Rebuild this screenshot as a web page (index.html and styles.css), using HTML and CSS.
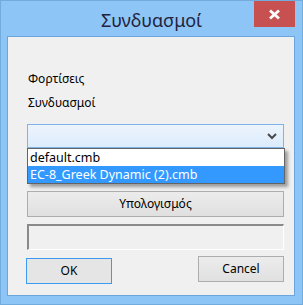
FILE: index.html
```html
<!DOCTYPE html>
<html>
<head>
<meta charset="utf-8">
<link rel="stylesheet" href="styles.css">
</head>
<body>
<div class="window">
  <div class="titlebar">
    <div class="title">Συνδυασμοί</div>
    <div class="close">
      <svg width="13" height="11" viewBox="0 0 13 11"><path d="M2 1.5 L11 9.5 M11 1.5 L2 9.5" stroke="#fff" stroke-width="2.8" stroke-linecap="butt"/></svg>
    </div>
  </div>
  <div class="client">
    <div class="label l1">Φορτίσεις</div>
    <div class="label l2">Συνδυασμοί</div>
    <div class="combo-wrap">
      <div class="combo">
        <svg class="chev" width="10" height="7" viewBox="0 0 10 7"><path d="M1 1 L5 5 L9 1" fill="none" stroke="#4a4a4a" stroke-width="2"/></svg>
      </div>
      <div class="dropdown">
        <div class="item">default.cmb</div>
        <div class="item sel">EC-8_Greek Dynamic (2).cmb</div>
      </div>
    </div>
    <div class="btn calc">Υπολογισμός</div>
    <div class="textbox"></div>
    <div class="actions">
      <div class="btn ok">OK</div>
      <div class="btn cancel">Cancel</div>
    </div>
  </div>
</div>
</body>
</html>
```
FILE: styles.css
```css
html, body {
  margin: 0;
  padding: 0;
  background: #8cc5f6;
}
.window {
  width: 303px;
  height: 305px;
  box-sizing: border-box;
  border: 1px solid #72acdf;
  background: #8cc5f6;
  padding: 0 7px 8px 6px;
  display: flex;
  flex-direction: column;
  font-family: "Noto Sans", sans-serif;
}
.titlebar {
  position: relative;
  height: 35px;
  margin: 0 -7px 0 -6px;
}
.title {
  text-align: center;
  font-size: 18px;
  line-height: 20px;
  padding-top: 9px;
  color: #23233d;
}
.close {
  position: absolute;
  top: 0;
  right: 7px;
  width: 41px;
  height: 26px;
  background: #c75050;
  display: flex;
  align-items: center;
  justify-content: center;
}
.client {
  flex: 1;
  border: 1px solid #6aa6dc;
  background: #f0f0f0;
  padding: 34px 10px 0 19px;
  display: flex;
  flex-direction: column;
  font-size: 12px;
  color: #000;
}
.label {
  line-height: 15px;
  padding-left: 1px;
}
.l2 {
  margin-top: 9px;
}
.combo-wrap {
  position: relative;
  margin-top: 14px;
}
.combo {
  height: 24px;
  box-sizing: border-box;
  border: 1px solid #7eb4ea;
  background: linear-gradient(#ecf4fc, #dcecfc);
  position: relative;
}
.chev {
  position: absolute;
  right: 6px;
  top: 8px;
}
.dropdown {
  position: absolute;
  left: 0;
  right: -1px;
  top: 24px;
  border: 1px solid #646464;
  background: #fff;
  box-shadow: 3px 3px 3px rgba(0,0,0,0.35);
  z-index: 2;
}
.item {
  height: 17px;
  line-height: 17px;
  padding-left: 2px;
  font-size: 12.5px;
}
.item.sel {
  background: #3399ff;
  color: #fff;
}
.btn {
  box-sizing: border-box;
  border: 1px solid #adadad;
  background: linear-gradient(#ececec, #e0e0e0);
  text-align: center;
  font-size: 12px;
}
.calc {
  margin-top: 43px;
  height: 26px;
  line-height: 24px;
}
.textbox {
  margin-top: 7px;
  height: 26px;
  box-sizing: border-box;
  border-style: solid;
  border-width: 2px 1px 1px 2px;
  border-color: #8a8a8a #ffffff #ffffff #8a8a8a;
  background: #f0f0f0;
}
.actions {
  display: flex;
  justify-content: space-between;
  align-items: flex-start;
  margin-top: 6px;
}
.ok {
  width: 86px;
  height: 26px;
  line-height: 24px;
  margin-top: 2px;
  margin-left: -1px;
  border-color: #3c9bf0;
  background: #e5e5e5;
}
.cancel {
  width: 86px;
  height: 26px;
  line-height: 24px;
}
```
